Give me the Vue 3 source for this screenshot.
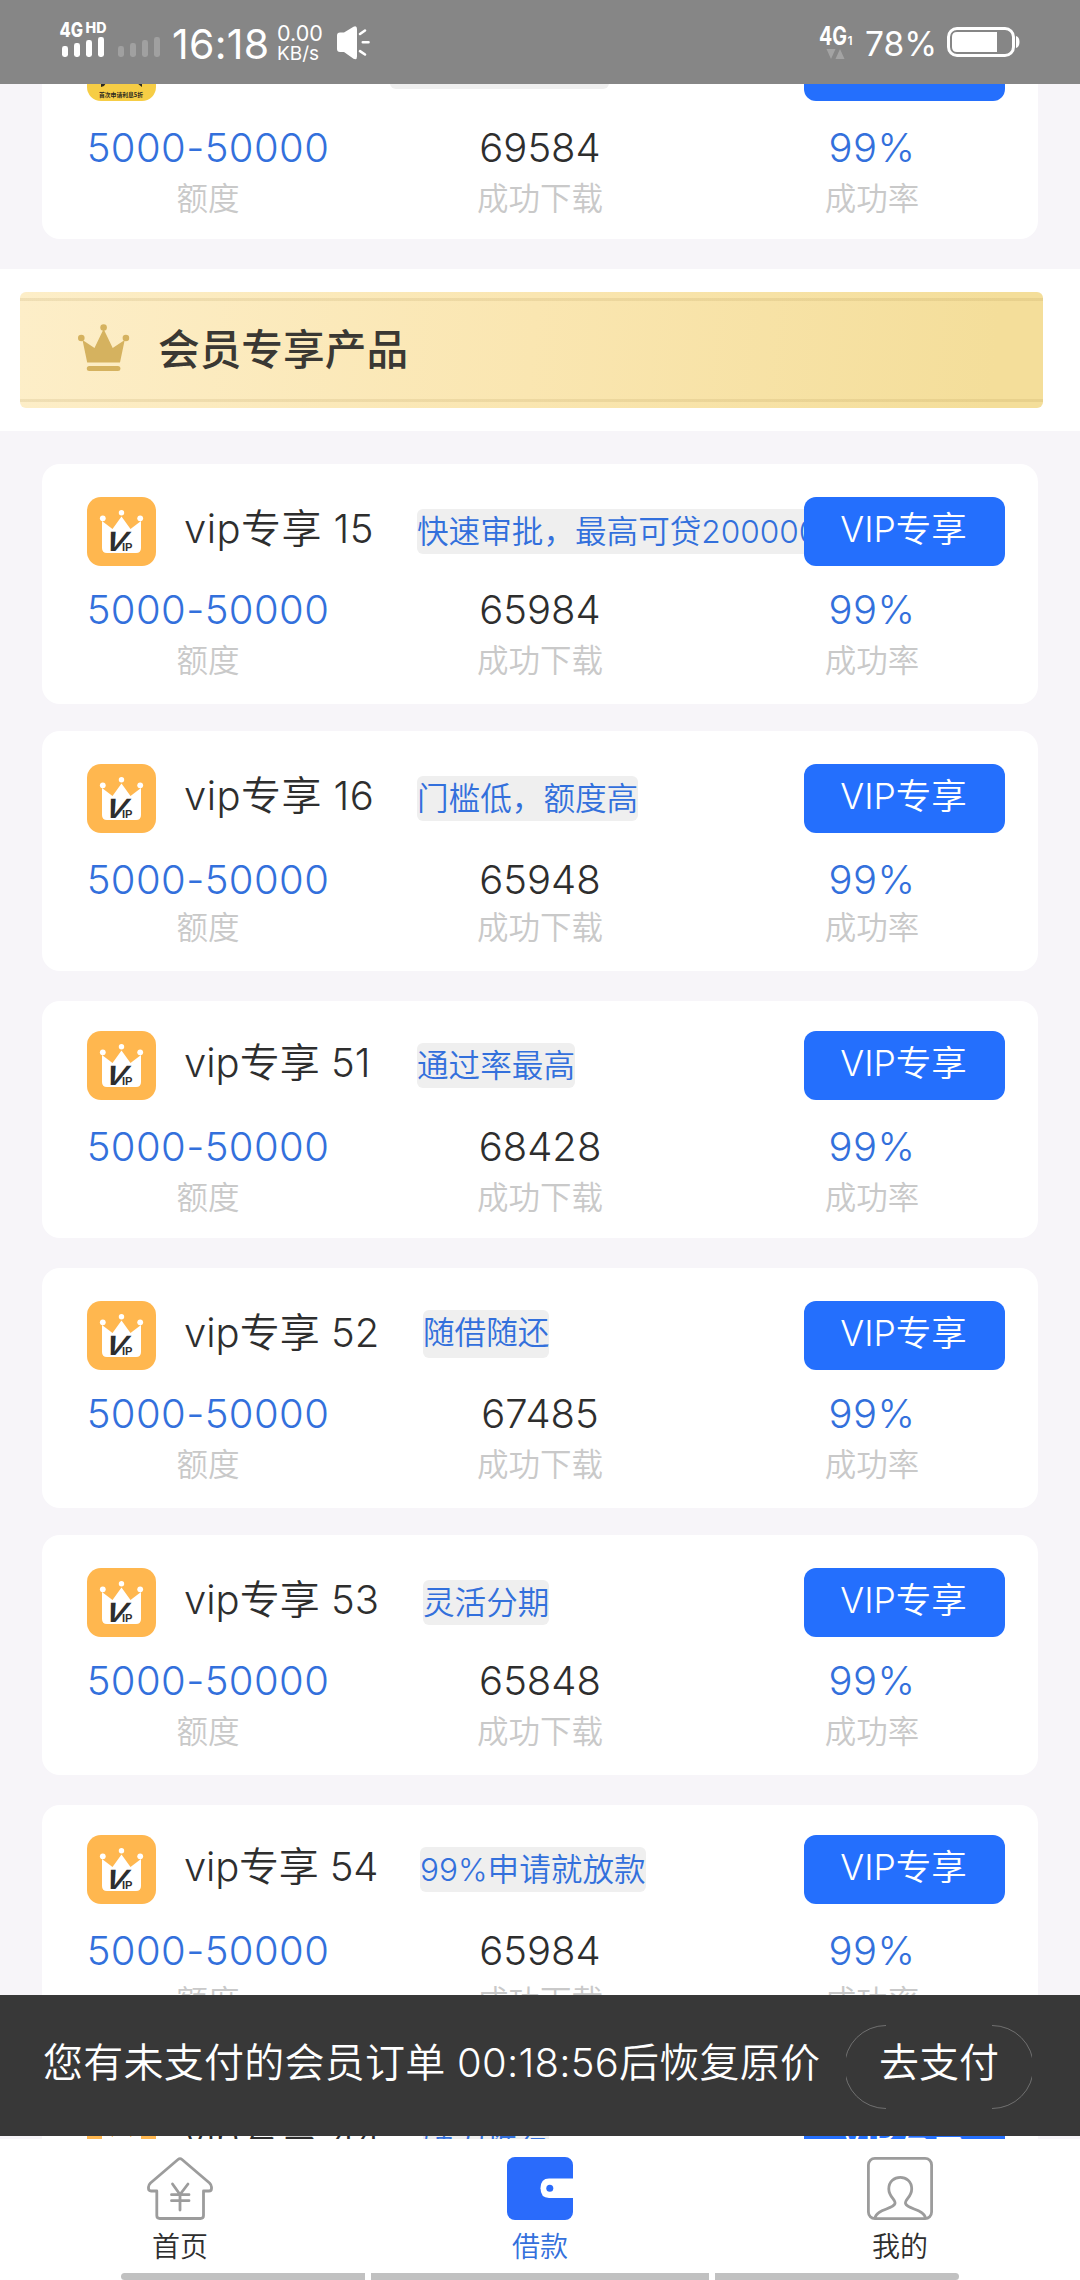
<script setup>
const products = [
  { name: 'vip专享 15', tag: '快速审批，最高可贷200000', downloads: '65984' },
  { name: 'vip专享 16', tag: '门槛低，额度高', downloads: '65948' },
  { name: 'vip专享 51', tag: '通过率最高', downloads: '68428' },
  { name: 'vip专享 52', tag: '随借随还', downloads: '67485' },
  { name: 'vip专享 53', tag: '灵活分期', downloads: '65848' },
  { name: 'vip专享 54', tag: '99%申请就放款', downloads: '65984' },
  { name: 'vip专享 44', tag: '强力推荐', downloads: '65984' },
]
</script>

<template>
  <div class="screen">
    <header class="status">
      <svg class="signal" width="100" height="36" viewBox="0 0 100 36">
        <text x="-0.5" y="16" class="net" textLength="23.5" lengthAdjust="spacingAndGlyphs">4G</text>
        <text x="25.5" y="11.5" class="hd" textLength="21" lengthAdjust="spacingAndGlyphs">HD</text>
        <g fill="#fff">
          <rect x="2" y="25" width="6" height="11" rx="2.4" />
          <rect x="14" y="22" width="6" height="14" rx="2.4" />
          <rect x="26" y="19" width="6" height="17" rx="2.4" />
          <rect x="38" y="16" width="6" height="20" rx="2.4" />
        </g>
        <g fill="#a0a0a0">
          <rect x="58" y="25" width="6" height="11" rx="2.4" />
          <rect x="70" y="22" width="6" height="14" rx="2.4" />
          <rect x="82" y="19" width="6" height="17" rx="2.4" />
          <rect x="94" y="16" width="6" height="20" rx="2.4" />
        </g>
      </svg>
      <span class="clock">16:18</span>
      <span class="speed"><span class="rate">0.00</span><span class="unit">KB/s</span></span>
      <svg class="speaker" width="34" height="34" viewBox="0 0 34 34">
        <path d="M3 6.5H7L16.5.7Q20-.8 20 3V30.5Q20 34.3 16.5 32.7L7 26H3Q0 26 0 23V9.5Q0 6.5 3 6.5Z" fill="#fff" />
        <path d="M23 8L28 4.5M25.8 16.2H31.5M23 25.2L28 28.5" stroke="#fff" stroke-width="2.6" stroke-linecap="round" />
      </svg>
      <span class="grow"></span>
      <svg class="data" width="36" height="34" viewBox="0 0 36 34">
        <text x="0" y="18.5" class="net net-lg" textLength="28" lengthAdjust="spacingAndGlyphs">4G</text>
        <text x="28.5" y="18.5" class="sub">1</text>
        <path d="M7.5 23H16.5L12 33ZM16.5 33H25.5L21 23Z" fill="#a3a3a3" />
      </svg>
      <span class="percent">78%</span>
      <svg class="battery" width="73" height="30" viewBox="0 0 73 30">
        <rect x="1.5" y="1.5" width="65" height="27" rx="8.5" fill="none" stroke="#fff" stroke-width="3" />
        <path d="M10 5H50V25H10Q5 25 5 20V10Q5 5 10 5Z" fill="#fff" />
        <path d="M69 9Q72.500 10 72.500 15Q72.500 20 69 21Z" fill="#fff" />
      </svg>
    </header>

    <main class="list">
      <section class="card low">
        <div class="head">
          <svg class="logo" width="69" height="69" viewBox="0 0 69 69">
            <rect width="69" height="69" rx="14" fill="#f6cd45" />
            <path d="M14 50.500Q17 52 19 51L17 54L14 55ZM50 51Q53 53 55 50.500V55L53 53.500Z" fill="#2d2a20" />
            <text x="12" y="64.500" class="tiny" textLength="44" lengthAdjust="spacingAndGlyphs">首次申请利息5折</text>
          </svg>
          <div class="pill"></div>
          <button class="cta">VIP专享</button>
        </div>
        <div class="values"><b class="blue">5000-50000</b><b>69584</b><b class="blue">99%</b></div>
        <div class="labels"><span>额度</span><span>成功下载</span><span>成功率</span></div>
      </section>

      <section class="banner-wrap">
        <div class="banner">
          <svg width="52" height="48" viewBox="0 0 52 48">
            <g fill="#d5b25f">
              <circle cx="25.600" cy="3.500" r="3.300" />
              <circle cx="3.300" cy="14" r="3.300" />
              <circle cx="47.900" cy="14" r="3.300" />
              <path d="M4.500 16L16.500 24L25.600 5L34.700 24L46.700 16L42 38.500H9.200Z" />
              <rect x="8.800" y="42" width="33.600" height="5" rx="2.500" />
            </g>
          </svg>
          <h2>会员专享产品</h2>
        </div>
      </section>

      <section v-for="(p, i) in products" :key="i" class="card" :class="`item-${i + 1}`">
        <div class="head">
          <svg class="logo" width="69" height="69" viewBox="0 0 69 69">
            <rect width="69" height="69" rx="14" fill="#ffb74f" />
            <g fill="#fff">
              <circle cx="15.800" cy="21.300" r="2.900" />
              <circle cx="34.500" cy="15.700" r="2.700" />
              <circle cx="53.200" cy="21.300" r="2.900" />
              <path d="M15 24L25.500 32L34.500 19.500L43.500 32L54 24V51Q54 56 49 56H20Q15 56 15 51Z" />
            </g>
            <text class="vee" transform="translate(15.500 53.500) skewX(-23)" textLength="21" lengthAdjust="spacingAndGlyphs">V</text>
            <text class="ip" x="35" y="54" textLength="10.500" lengthAdjust="spacingAndGlyphs">IP</text>
          </svg>
          <div class="title">
            <span class="name">{{ p.name }}</span>
            <span class="tag">{{ p.tag }}</span>
          </div>
          <button class="cta">VIP专享</button>
        </div>
        <div class="values"><b class="blue">5000-50000</b><b>{{ p.downloads }}</b><b class="blue">99%</b></div>
        <div class="labels"><span>额度</span><span>成功下载</span><span>成功率</span></div>
      </section>
    </main>

    <aside class="notice">
      <p>您有未支付的会员订单 00:18:56后恢复原价</p>
      <div class="pay">
        <svg width="186" height="84" viewBox="0 0 186 84" fill="none" stroke="#707070" stroke-width="1">
          <path d="M40 .5A41.500 41.500 0 0 0 40 83.500M146 .5A41.500 41.500 0 0 1 146 83.500" />
        </svg>
        <span>去支付</span>
      </div>
    </aside>

    <nav class="tabs">
      <a class="tab">
        <svg width="66" height="63" viewBox="0 0 66 63" fill="none" stroke="#9c9c9c" stroke-width="2.800" stroke-linecap="round" stroke-linejoin="round">
          <path d="M31 2.500Q33 .8 35 2.500L62.500 26Q64.500 28 64.500 30V31.500Q64.500 34 62 34H56.500V58.500Q56.500 61.500 53.500 61.500H12.800Q9.800 61.500 9.800 58.500V34H4Q1.500 34 1.500 31.500V30Q1.500 28 3.500 26Z" />
          <path d="M25.500 27L33 37.500L41 27M33 37.500V53M24.500 37.700H42M24.500 43.700H42" />
        </svg>
        <span>首页</span>
      </a>
      <a class="tab active">
        <svg width="66" height="63" viewBox="0 0 66 63">
          <rect width="66" height="63" rx="8" fill="#2a6bfb" />
          <path d="M66 21.500H42Q33.500 21.500 33.500 31.300Q33.500 41 42 41H66Z" fill="#fff" />
          <circle cx="42.800" cy="31.300" r="3.500" fill="#2a6bfb" />
        </svg>
        <span>借款</span>
      </a>
      <a class="tab">
        <svg width="66" height="63" viewBox="0 0 66 63" fill="none" stroke="#9c9c9c" stroke-width="2.800">
          <rect x="1.400" y="1.400" width="63.200" height="60.200" rx="6.500" />
          <path d="M8 61C9.500 52 26 52.500 28 46.500C28.800 42.500 21.800 40 21.800 32C21.800 16.500 44.700 16.500 44.700 32C44.700 40 37.700 42.500 38.500 46.500C40.500 52.500 57 52 58.500 61" />
        </svg>
        <span>我的</span>
      </a>
      <div class="gesture"><i></i><i></i><i></i></div>
    </nav>
  </div>
</template>

<style>
body { margin: 0; }
</style>

<style scoped>
.screen {
  position: relative;
  display: flex;
  flex-direction: column;
  width: 1080px;
  height: 2280px;
  overflow: hidden;
  background: #f7f5f9;
  color: #2e2e2e;
  font-family: Inter, "Noto Sans CJK SC", sans-serif;
  font-weight: 350;
}

/* status bar */
.status {
  position: relative;
  z-index: 1;
  display: flex;
  flex: none;
  align-items: flex-start;
  box-sizing: border-box;
  height: 84px;
  padding: 0 60px;
  background: #868686;
  color: #fff;
  white-space: nowrap;
}
.status svg { flex: none; overflow: visible; }
.signal { margin-top: 21px; }
.net { fill: #fff; font: 800 20px Inter, sans-serif; }
.net-lg { font-size: 25px; font-weight: 700; }
.hd { fill: #fff; font: 800 14px Inter, sans-serif; }
.sub { fill: #fff; font: 600 12px Inter, sans-serif; }
.clock {
  width: 99px;
  margin: 20px 0 0 12px;
  font-size: 41px;
  font-weight: 400;
  letter-spacing: .3px;
  line-height: 48px;
}
.speed {
  display: flex;
  flex-direction: column;
  width: 52px;
  margin: 22px 0 0 6px;
  font-weight: 400;
}
.rate { font-size: 21.5px; line-height: 23px; }
.unit { font-size: 19px; line-height: 18px; }
.speaker { margin: 26px 0 0 8px; }
.grow { flex: 1; }
.data { margin: 26px 10px 0 0; }
.percent {
  width: 70px;
  margin: 24px 12px 0 0;
  font-size: 33.5px;
  font-weight: 400;
  line-height: 40px;
}
.battery { margin-top: 27px; }

/* product list */
.list { flex: 1; min-height: 0; overflow: hidden; }
.card {
  display: flow-root;
  width: 996px;
  height: 240px;
  margin: 27px auto 0;
  border-radius: 18px;
  background: #fff;
}
.card.low { height: 237px; margin-top: -82px; }
.card.item-1 { margin-top: 33px; }
.card.item-3 { height: 237px; margin-top: 30px; }
.card.item-4, .card.item-6 { margin-top: 30px; }
.head {
  display: flex;
  align-items: flex-start;
  height: 69px;
  margin: 33px 33px 0 45px;
}
.low .head, .item-3 .head, .item-6 .head { margin-top: 30px; }
.logo { flex: none; }
.vee { fill: #2e2e2e; font: 700 28px "Liberation Sans", sans-serif; }
.ip { fill: #2e2e2e; font: 700 10.5px "Liberation Sans", sans-serif; }
.tiny { fill: #2d2a20; font: 700 6px "Noto Sans CJK SC", sans-serif; }
.pill {
  width: 219px;
  height: 45px;
  margin: 12px auto 0 234px;
  border-radius: 6px;
  background: #efefef;
}
.title {
  display: flex;
  flex: 1;
  align-items: flex-start;
  min-width: 0;
  height: 69px;
  padding-left: 28px;
  overflow: hidden;
  white-space: nowrap;
}
.name {
  flex: none;
  width: 197px;
  margin-right: 42px;
  padding-top: 2px;
  font-size: 40px;
  line-height: 60px;
}
.item-1 .name, .item-2 .name, .item-3 .name { width: 191px; }
.item-1 .name, .item-2 .name { letter-spacing: .45px; }
.item-6 .name { width: 194px; letter-spacing: -.2px; }
.tag {
  flex: none;
  height: 45px;
  margin-top: 12px;
  border-radius: 6px;
  background: #efefef;
  color: #3370dc;
  font-size: 31.6px;
  line-height: 45px;
}
.item-4 .tag { height: 48px; margin-top: 9px; }
.cta {
  flex: none;
  width: 201px;
  height: 69px;
  padding: 0 2px 3px 0;
  border: 0;
  border-radius: 12px;
  background: #246ffd;
  color: #fff;
  font: 350 35.5px/66px Inter, "Noto Sans CJK SC", sans-serif;
}
.values, .labels { display: grid; grid-template-columns: repeat(3, 1fr); text-align: center; }
.values { height: 48px; margin-top: 20px; }
.low .values, .item-2 .values, .item-3 .values, .item-6 .values { margin-top: 23px; }
.values b { font-size: 40px; font-weight: 300; line-height: 48px; }
.values .blue { color: #3370dc; letter-spacing: .4px; }
.labels { margin-top: 7px; color: #c9c9c9; font-size: 31.5px; line-height: 40px; }
.item-2 .labels { margin-top: 4px; }

/* section banner */
.banner-wrap {
  box-sizing: border-box;
  height: 162px;
  margin-top: 30px;
  padding: 23px 37px 0 20px;
  background: #fff;
}
.banner {
  display: flex;
  align-items: center;
  box-sizing: border-box;
  height: 116px;
  padding-left: 58px;
  border-radius: 6px;
  background:
    linear-gradient(rgba(150, 120, 50, .13), rgba(150, 120, 50, .13)) 0 6px / 100% 3px no-repeat,
    linear-gradient(rgba(150, 120, 50, .13), rgba(150, 120, 50, .13)) 0 107px / 100% 3px no-repeat,
    linear-gradient(95deg, #fdeec8, #fae6b1 50%, #f4de9a 95%);
}
.banner svg { margin-top: -4px; }
.banner h2 { margin: -6px 0 0 28px; color: #3a3833; font-size: 41.7px; font-weight: 500; }

/* unpaid order notice */
.notice {
  position: absolute;
  left: 0;
  top: 1995px;
  display: flex;
  align-items: flex-start;
  box-sizing: border-box;
  width: 1080px;
  height: 141px;
  padding-left: 43px;
  background: #383838;
  color: #fff;
  font-size: 40px;
  white-space: nowrap;
}
.notice p { width: 803px; margin: 39px 0 0; line-height: 58px; letter-spacing: .25px; }
.pay { display: grid; margin-top: 30px; }
.pay svg, .pay span { grid-area: 1 / 1; }
.pay span { text-align: center; line-height: 76px; }

/* bottom tabs */
.tabs {
  display: grid;
  grid-template-columns: repeat(3, 360px);
  grid-template-rows: 134px 7px;
  flex: none;
  height: 141px;
  background: #fff;
}
.tab {
  display: flex;
  flex-direction: column;
  align-items: center;
  padding-top: 18px;
  font-size: 28px;
}
.tab span { margin-top: 9px; line-height: 36px; }
.tab.active { color: #3370dc; }
.gesture { display: flex; grid-column: 1 / 4; gap: 6px; padding-left: 121px; }
.gesture i { width: 244px; height: 7px; background: #c1c1c1; }
.gesture i:nth-child(2) { width: 338px; }
.gesture i:first-child { border-radius: 4px 0 0 4px; }
.gesture i:last-child { border-radius: 0 4px 4px 0; }
</style>
